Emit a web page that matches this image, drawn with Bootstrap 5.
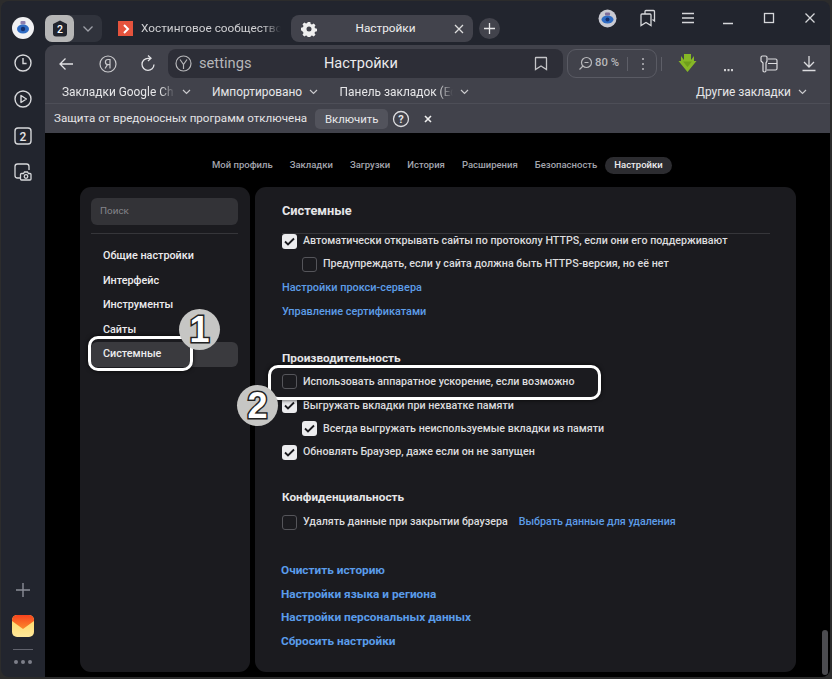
<!DOCTYPE html>
<html lang="ru"><head><meta charset="utf-8"><title>Настройки</title>
<link href="https://cdn.jsdelivr.net/npm/bootstrap@5.3.0/dist/css/bootstrap.min.css" rel="stylesheet">
<style>
html,body{height:679px;overflow:hidden;background:#2c2c2c}
body{font-family:Roboto,"Noto Sans",sans-serif;color:#e8e8ea;padding:1px 2px 2px 1px}
.win{height:676px;background:#22252e;border-radius:8px;position:relative;overflow:hidden}
.rail{width:44px;flex:none;padding-top:16px;padding-bottom:13px}
.rail svg{display:block}
.rico{height:22px;margin-bottom:14.3px}
.logo{width:22px;height:22px;border-radius:50%;background:#f1f1f3;margin-bottom:14px}
.raildots{gap:3px}.raildots i{width:4px;height:4px;border-radius:50%;background:#7d7f89;display:block}
.railln{width:20px;height:1px;background:#61636d;margin:12px 0 10px}
.railplus{margin-bottom:13px}
.maincol{min-width:0}
.tabsbar{height:44px;flex:none;padding-top:14px;position:relative}
.grp{width:57px;height:27px;border-radius:7px;background:#30333c}
.grpa{width:29px;background:#b6b6b6;border-radius:7px}
.tabplain{width:190px;height:27px;padding-left:16px;font-size:11.8px;color:#d0d0d3;white-space:nowrap}
.tabname{width:141px;-webkit-mask-image:linear-gradient(90deg,#000 122px,transparent 140px);mask-image:linear-gradient(90deg,#000 122px,transparent 140px)}
.fav{width:15px;height:15px;background:#e5533d;flex:none;margin-right:8px}
.tabact{width:182px;height:27px;background:#42434c;border-radius:8px;font-size:11.8px;color:#eee;padding:0 9px 0 10px;margin-left:-1px}
.tabplus{width:21px;height:21px;border-radius:50%;background:#42434c;margin:3px 0 0 6px}
.winbtns{position:absolute;right:0;top:0;height:34px}
.winbtns>span{width:40.5px;display:flex;justify-content:center}
.chromebar{background:#41424b;border-radius:9px 0 0 0;height:88px;flex:none;color:#e6e6e8}
.tool{height:35px;padding:4px 0 0 0}
.tbic{width:41px;flex:none;display:flex;justify-content:center;align-items:center;height:29px}
.tb-back{width:42px}.tb-re{width:39px}.tb-dl{width:51px}.tb-more{width:31px;padding-top:14px}.tb-ext{width:49px}.tb-down{width:31px}
.omni{width:395px;height:29px;background:#2d2e37;border-radius:8px;margin-left:1px;position:relative;font-size:14.5px}
.omni .st{color:#b6b6b9;margin-left:31px;font-size:14.7px}
.omni .ti{position:absolute;left:156px;top:4px;color:#eaeaec}
.omni svg{position:absolute}
.omni .y{left:7px;top:6px}.omni .bm{right:15px;top:7px}
.zoompill{width:90px;height:29px;border:1px solid #5a5b64;border-radius:9px;margin-left:4px;font-size:11.3px;color:#b9b9bc;font-weight:500;padding-left:10px}
.zoompill .pct{margin-left:2px}
.zoompill .keb{margin-right:11px}
.vsep{width:1px;height:14px;background:#5e5f68}
.vsep.outer{margin:8px 0 0 4px}
.bmks{height:24px;font-size:11.9px;border-bottom:1px solid #4d4e57;padding:2px 0 0 17px;position:relative}
.bmk{white-space:nowrap;display:flex;align-items:center}
.bmk svg{margin-left:7px}
.bmk2{margin-left:21px}.bmk3{margin-left:21.500px}.bmk4{margin-right:23px}
.cutb{width:113px;-webkit-mask-image:linear-gradient(90deg,#000 98px,transparent 113px);mask-image:linear-gradient(90deg,#000 98px,transparent 113px)}
.infob{height:29px;font-size:11.6px;padding-left:9px;color:#e4e4e6}
.btn.onbtn{--bs-btn-padding-y:0;--bs-btn-padding-x:0;--bs-btn-font-size:11.4px;--bs-btn-color:#e8e8ea;--bs-btn-bg:#52535c;--bs-btn-border-width:0;--bs-btn-border-radius:5px;width:73px;height:20px;line-height:20px;margin:0 4px 0 8px}
.infox{margin-left:14px}
.pagearea{background:#000;min-height:0}
.topnav{height:54px;padding-left:167px;font-size:9.5px;font-weight:500;gap:17px;padding-top:11px}
.topnav a{color:#a3a5ae;text-decoration:none;white-space:nowrap}
.topnav .cur{background:#2c2c30;color:#ececee;border-radius:9px;padding:1px 9px;margin-left:-9px}
.panels{gap:5px;padding-left:35px}
.pane{background:#1b1b1f;border-radius:11px;height:485px}
.leftp{width:170px;flex:none;padding:11px 12px 11px 11px}
.srch{height:27px;background:#333337;border-radius:6px;font-size:9.9px;color:#85858b;padding-left:9px;line-height:25px}
.lsep{height:1px;background:#36363a;margin:8px 0 10px}
.lnav a{display:block;height:24.5px;line-height:24.5px;padding-left:12px;font-size:10.8px;font-weight:500;color:#ececee;text-decoration:none;border-radius:6px}
.lnav a.on{background:#3a3a3e}
.rightp{width:541px;flex:none;padding:16px 26px 0 27px;font-size:10.7px;font-weight:500;color:#dcdcde}
.hd{font-size:11.8px;font-weight:700;color:#e6e6e8;line-height:16px}
.hd1{font-size:12.8px;padding-bottom:14px;border-bottom:1px solid #36363a}
.opt{height:16px;line-height:16px;gap:6px;white-space:nowrap}
.ind{padding-left:20px}
.ck{width:15px;height:15px;border-radius:3px;flex:none;background:#ececee;display:flex;align-items:center;justify-content:center}
.ck.off{background:#1b1b1f;border:1px solid #55555a}
.lnk{color:#5d9de8;text-decoration:none;font-weight:500}
.lnk.opt{font-size:10.9px}
.optlink{margin-left:5px}
.bigl{display:block;font-size:11.8px;font-weight:700;line-height:16px;color:#5a9cea;margin-left:-1px}
.m74{margin-top:7.3px}.m8{margin-top:8px}.m9{margin-top:9px}.m68{margin-top:6.800px}.m78{margin-top:7.800px}
.first{margin-top:-1px}.mh{margin-top:30px}.mh29{margin-top:29px}.mb32{margin-top:32px}
.sb{position:absolute;left:821px;top:629px;width:6px;height:45px;background:#4c4c50;border-radius:3px}
.callout{position:absolute;border:3px solid #fff;border-radius:10px;box-shadow:0 0 4px rgba(0,0,0,.8)}
.co1{left:87px;top:335px;width:105px;height:35px}
.co2{left:267px;top:364px;width:333px;height:35px}
.bub{position:absolute;width:41px;height:41px;border-radius:50%;background:#c6c6c4;display:flex;align-items:center;justify-content:center;font:700 36px/1 "Liberation Sans",sans-serif;color:#fff;-webkit-text-stroke:3px #222;paint-order:stroke fill}
.b1{left:178px;top:308px}.b2{left:236px;top:384px}
</style></head><body>
<div class="win d-flex">
 <div class="rail d-flex flex-column align-items-center">
  <div class="logo d-flex align-items-center justify-content-center"><svg width="16" height="16" viewBox="0 0 16 16"><rect x="5.5" y="1" width="5" height="3.500" rx="1" fill="#8d7fb0"/><ellipse cx="8" cy="9" rx="6" ry="4.600" fill="#2f6cc4"/><circle cx="8" cy="9" r="2.200" fill="#16306f"/></svg></div>
  <div class="rico"><svg width="20" height="20" viewBox="0 0 20 20" fill="none" stroke="#d6d7da" stroke-width="1.4"><circle cx="10" cy="10" r="8"/><path d="M10 5v5.500h3.600"/></svg></div>
  <div class="rico"><svg width="20" height="20" viewBox="0 0 20 20" fill="none" stroke="#d6d7da" stroke-width="1.4"><circle cx="10" cy="10" r="8"/><path d="M8 6.500v7l5.400-3.500z" stroke-linejoin="round"/></svg></div>
  <div class="rico"><svg width="20" height="20" viewBox="0 0 20 20"><rect x="2" y="2" width="16" height="16" rx="3" fill="none" stroke="#d6d7da" stroke-width="1.4"/><text x="10" y="14.500" text-anchor="middle" font-family="Roboto" font-weight="500" font-size="12" fill="#e6e6e8">2</text></svg></div>
  <div class="rico"><svg width="20" height="20" viewBox="0 0 20 20" fill="none" stroke="#d6d7da" stroke-width="1.3"><path d="M7 16H4.500A2.500 2.500 0 0 1 2 13.500V4.500A2.500 2.500 0 0 1 4.500 2h9A2.500 2.500 0 0 1 16 4.500V8"/><path d="M8.500 11.500h2l1-1.500h3l1 1.500h1.500a1 1 0 0 1 1 1V17a1 1 0 0 1-1 1h-8.500a1 1 0 0 1-1-1v-4.500a1 1 0 0 1 1-1z" fill="#22252e"/><circle cx="13" cy="14.500" r="1.800"/></svg></div>
  <div class="mt-auto rico railplus"><svg width="20" height="20" viewBox="0 0 20 20" stroke="#8b8d97" stroke-width="1.400"><path d="M10 3v14M3 10h14"/></svg></div>
  <svg width="22" height="22" viewBox="0 0 22 22"><defs><linearGradient id="mg" x1="0" y1="0" x2="0" y2="1"><stop offset="0" stop-color="#ffd65e"/><stop offset="1" stop-color="#ffe89a"/></linearGradient><linearGradient id="mf" x1="0" y1="0" x2="0" y2="1"><stop offset="0" stop-color="#f7431e"/><stop offset="1" stop-color="#fb8a2c"/></linearGradient></defs><rect width="22" height="22" rx="5" fill="url(#mg)"/><path d="M0 5a5 5 0 0 1 5-5h12a5 5 0 0 1 5 5v1l-11 8L0 6z" fill="url(#mf)"/></svg>
  <div class="railln"></div>
  <div class="d-flex raildots"><i></i><i></i><i></i></div>
 </div>
 <div class="maincol flex-grow-1 d-flex flex-column">
  <div class="tabsbar d-flex align-items-start">
   <div class="grp d-flex"><div class="grpa d-flex align-items-center justify-content-center"><svg width="16" height="17" viewBox="0 0 16 17"><path d="M8 .5 15 4v9.500a3 3 0 0 1-3 3H4a3 3 0 0 1-3-3V4z" fill="#22252e"/><text x="8" y="13" text-anchor="middle" font-family="Roboto" font-weight="500" font-size="10.500" fill="#fff">2</text></svg></div><div class="flex-grow-1 d-flex align-items-center justify-content-center"><svg width="12" height="8" viewBox="0 0 12 8" fill="none" stroke="#9ea0a8" stroke-width="1.300"><path d="M1.500 1.500 6 6l4.500-4.500"/></svg></div></div>
   <div class="tabplain d-flex align-items-center"><span class="fav d-flex align-items-center justify-content-center"><svg width="8" height="10" viewBox="0 0 8 10" fill="none" stroke="#fff" stroke-width="2"><path d="M2 1l4 4-4 4"/></svg></span><span class="tabname">Хостинговое сообщество</span></div>
   <div class="tabact d-flex align-items-center"><svg width="16" height="16" viewBox="0 0 16 16" fill="#eee"><path fill-rule="evenodd" d="M6.700 1h2.600l.4 1.900 1.300.6 1.700-1 1.800 1.800-1 1.700.6 1.300 1.900.4v2.600l-1.900.4-.6 1.300 1 1.700-1.800 1.800-1.700-1-1.300.6-.4 1.900H6.700l-.4-1.900-1.300-.6-1.700 1-1.800-1.800 1-1.700-.6-1.300L0 9.300V6.700l1.900-.4.600-1.300-1-1.700 1.800-1.800 1.700 1 1.300-.6zM8 5.500a2.500 2.500 0 1 0 0 5 2.500 2.500 0 0 0 0-5z"/></svg><span class="flex-grow-1 text-center">Настройки</span><svg width="10" height="10" viewBox="0 0 10 10" stroke="#ddd" stroke-width="1.300"><path d="M1 1l8 8M9 1 1 9"/></svg></div>
   <div class="tabplus d-flex align-items-center justify-content-center"><svg width="13" height="13" viewBox="0 0 13 13" stroke="#e6e6e8" stroke-width="1.300"><path d="M6.500 1v11M1 6.500h11"/></svg></div>
   <div class="winbtns d-flex align-items-center">
    <span><svg width="19" height="19" viewBox="0 0 19 19"><circle cx="9.500" cy="9.500" r="9" fill="#c9cad2"/><ellipse cx="9.500" cy="10.500" rx="6" ry="4" fill="#2f6cc4"/><circle cx="9.500" cy="10.500" r="2" fill="#16306f"/><rect x="7" y="3.500" width="5" height="3" rx="1" fill="#7f6d9a"/></svg></span>
    <span><svg width="18" height="18" viewBox="0 0 18 18" fill="none" stroke="#d6d7da" stroke-width="1.300"><path d="M6 5V2.500A1 1 0 0 1 7 1.500h7.500a1 1 0 0 1 1 1V12l-2-1.500"/><path d="M3 5h8a1 1 0 0 1 1 1v10.500l-5-3-5 3V6a1 1 0 0 1 1-1z"/></svg></span>
    <span><svg width="16" height="14" viewBox="0 0 16 14" stroke="#d6d7da" stroke-width="1.300"><path d="M2 2.500h12M2 7h12M2 11.500h12"/></svg></span>
    <span><svg width="14" height="14" viewBox="0 0 14 14" stroke="#d6d7da" stroke-width="1.300"><path d="M1 12.500h10"/></svg></span>
    <span><svg width="14" height="14" viewBox="0 0 14 14" fill="none" stroke="#d6d7da" stroke-width="1.300"><rect x="2.500" y="2.500" width="9" height="9"/></svg></span>
    <span><svg width="14" height="14" viewBox="0 0 14 14" stroke="#d6d7da" stroke-width="1.300"><path d="M2.500 2.500l9 9M11.500 2.500l-9 9"/></svg></span>
   </div>
  </div>
  <div class="chromebar">
   <div class="tool d-flex align-items-start">
    <div class="tbic tb-back"><svg width="16" height="14" viewBox="0 0 16 14" fill="none" stroke="#e2e2e5" stroke-width="1.300"><path d="M15 7H2M7.500 1.500 2 7l5.500 5.500"/></svg></div>
    <div class="tbic"><svg width="18" height="18" viewBox="0 0 18 18" fill="none" stroke="#c9c9cc" stroke-width="1.200"><circle cx="9" cy="9" r="8"/><path d="M11 13.500v-9H9a2.600 2.600 0 0 0 0 5.200h2M8.500 9.700l-2.500 3.800"/></svg></div>
    <div class="tbic tb-re"><svg width="16" height="17" viewBox="0 0 16 17" fill="none" stroke="#e2e2e5" stroke-width="1.300"><path d="M14 9.500a6 6 0 1 1-6-6.200h2.500"/><path d="M8 .5l3 2.800L8 6"/></svg></div>
    <div class="omni d-flex align-items-center"><svg class="y" width="17" height="17" viewBox="0 0 17 17" fill="none" stroke="#b6b6b9" stroke-width="1.200"><circle cx="8.500" cy="8.500" r="7.500"/><path d="M5 4.500l3.500 5 3.500-5M8.500 9.500V14"/></svg><span class="st">settings</span><span class="ti">Настройки</span><svg class="bm" width="14" height="15" viewBox="0 0 14 15" fill="none" stroke="#c4c4c7" stroke-width="1.300"><path d="M2 1.500h10a.5.5 0 0 1 .5.5v11.500L7 10l-5.500 3.500V2a.5.5 0 0 1 .5-.5z"/></svg></div>
    <div class="zoompill d-flex align-items-center"><svg width="15" height="15" viewBox="0 0 15 15" fill="none" stroke="#b9b9bc" stroke-width="1.200"><circle cx="8.500" cy="6.500" r="5"/><path d="M6.500 6.500h4M5 10l-3.500 3.500"/></svg><span class="pct">80 %</span><span class="vsep ms-2"></span><svg class="ms-auto keb" width="4" height="14" viewBox="0 0 4 14" fill="#b9b9bc"><circle cx="2" cy="2" r="1"/><circle cx="2" cy="7" r="1"/><circle cx="2" cy="12" r="1"/></svg></div>
    <span class="vsep outer"></span>
    <div class="tbic tb-dl"><svg width="19" height="19" viewBox="0 0 19 19"><path d="M6 0h7v6l3-4v5h2.500L9.500 18 .5 7H3V2l3 4z" fill="#86b726"/><path d="M5 7.500h9L9.500 13z" fill="#6f9e1c"/></svg></div>
    <div class="tbic tb-more"><svg width="9" height="3" viewBox="0 0 9 3" fill="#cfcfd2"><rect width="2" height="2.200"/><rect x="3.500" width="2" height="2.200"/><rect x="7" width="2" height="2.200"/></svg></div>
    <div class="tbic tb-ext"><svg width="18" height="18" viewBox="0 0 18 18" fill="none" stroke="#dcdcdf" stroke-width="1.200"><path d="M1 2.500A1.500 1.500 0 0 1 2.500 1h3A1.500 1.500 0 0 1 7 2.500V6L6 8v7.500a1.500 1.500 0 0 1-1.500 1.500h0A1.500 1.500 0 0 1 3 15.500V8L1 6z"/><path d="M8 4h7.500A1.500 1.500 0 0 1 17 5.500v8a1.500 1.500 0 0 1-1.500 1.500H7M8 8.500h9"/></svg></div>
    <div class="tbic tb-down"><svg width="16" height="17" viewBox="0 0 16 17" fill="none" stroke="#dcdcdf" stroke-width="1.300"><path d="M8 1v10.500M3 7l5 5 5-5M1.500 15.500h13"/></svg></div>
   </div>
   <div class="bmks d-flex align-items-center">
    <span class="bmk"><span class="cutb">Закладки Google Ch</span><svg width="9" height="6" viewBox="0 0 9 6" fill="none" stroke="#c9c9cc" stroke-width="1.200"><path d="M1 1l3.500 3.500L8 1"/></svg></span>
    <span class="bmk bmk2">Импортировано<svg width="9" height="6" viewBox="0 0 9 6" fill="none" stroke="#c9c9cc" stroke-width="1.200"><path d="M1 1l3.500 3.500L8 1"/></svg></span>
    <span class="bmk bmk3"><span class="cutb">Панель закладок (Ес</span><svg width="9" height="6" viewBox="0 0 9 6" fill="none" stroke="#c9c9cc" stroke-width="1.200"><path d="M1 1l3.500 3.500L8 1"/></svg></span>
    <span class="bmk ms-auto bmk4">Другие закладки<svg width="9" height="6" viewBox="0 0 9 6" fill="none" stroke="#c9c9cc" stroke-width="1.200"><path d="M1 1l3.500 3.500L8 1"/></svg></span>
   </div>
   <div class="infob d-flex align-items-center"><span>Защита от вредоносных программ отключена</span><button class="btn onbtn" type="button">Включить</button><svg width="18" height="18" viewBox="0 0 18 18"><circle cx="9" cy="9" r="7.500" fill="none" stroke="#dcdcdf" stroke-width="1.300"/><text x="9" y="13" text-anchor="middle" font-family="Roboto" font-weight="700" font-size="11" fill="#e6e6e8">?</text></svg><svg class="infox" width="8" height="8" viewBox="0 0 8 8" stroke="#eee" stroke-width="1.600"><path d="M1 1l6 6M7 1 1 7"/></svg></div>
  </div>
  <div class="pagearea flex-grow-1">
   <nav class="topnav d-flex align-items-center"><a href="#">Мой профиль</a><a href="#">Закладки</a><a href="#">Загрузки</a><a href="#">История</a><a href="#">Расширения</a><a href="#">Безопасность</a><a href="#" class="cur">Настройки</a></nav>
   <div class="panels d-flex">
    <aside class="pane leftp"><div class="srch">Поиск</div><div class="lsep"></div>
     <div class="lnav"><a href="#">Общие настройки</a><a href="#">Интерфейс</a><a href="#">Инструменты</a><a href="#">Сайты</a><a href="#" class="on">Системные</a></div></aside>
    <section class="pane rightp">
     <div class="hd hd1">Системные</div>
     <div class="opt d-flex align-items-center first"><span class="ck"><svg width="11" height="9" viewBox="0 0 11 9" fill="none" stroke="#1b1b1f" stroke-width="1.800"><path d="M1 4.500 4 7.500 10 1.500"/></svg></span><span>Автоматически открывать сайты по протоколу HTTPS, если они его поддерживают</span></div>
     <div class="opt ind d-flex align-items-center m74"><span class="ck off"></span><span>Предупреждать, если у сайта должна быть HTTPS-версия, но её нет</span></div>
     <a class="lnk d-block opt m74" href="#">Настройки прокси-сервера</a>
     <a class="lnk d-block opt m8" href="#">Управление сертификатами</a>
     <div class="hd mh">Производительность</div>
     <div class="opt d-flex align-items-center m8"><span class="ck off"></span><span>Использовать аппаратное ускорение, если возможно</span></div>
     <div class="opt d-flex align-items-center m8"><span class="ck"><svg width="11" height="9" viewBox="0 0 11 9" fill="none" stroke="#1b1b1f" stroke-width="1.800"><path d="M1 4.500 4 7.500 10 1.500"/></svg></span><span>Выгружать вкладки при нехватке памяти</span></div>
     <div class="opt ind d-flex align-items-center m74"><span class="ck"><svg width="11" height="9" viewBox="0 0 11 9" fill="none" stroke="#1b1b1f" stroke-width="1.800"><path d="M1 4.500 4 7.500 10 1.500"/></svg></span><span>Всегда выгружать неиспользуемые вкладки из памяти</span></div>
     <div class="opt d-flex align-items-center m74"><span class="ck"><svg width="11" height="9" viewBox="0 0 11 9" fill="none" stroke="#1b1b1f" stroke-width="1.800"><path d="M1 4.500 4 7.500 10 1.500"/></svg></span><span>Обновлять Браузер, даже если он не запущен</span></div>
     <div class="hd mh29">Конфиденциальность</div>
     <div class="opt d-flex align-items-center m9"><span class="ck off"></span><span>Удалять данные при закрытии браузера</span><a class="lnk optlink" href="#">Выбрать данные для удаления</a></div>
     <a class="lnk bigl mb32" href="#">Очистить историю</a>
     <a class="lnk bigl m8" href="#">Настройки языка и региона</a>
     <a class="lnk bigl m68" href="#">Настройки персональных данных</a>
     <a class="lnk bigl m78" href="#">Сбросить настройки</a>
    </section>
   </div>
  </div>
 </div>
 <div class="sb"></div>
 <div class="callout co1"></div><div class="callout co2"></div>
 <div class="bub b1">1</div><div class="bub b2">2</div>
</div>
</body></html>
